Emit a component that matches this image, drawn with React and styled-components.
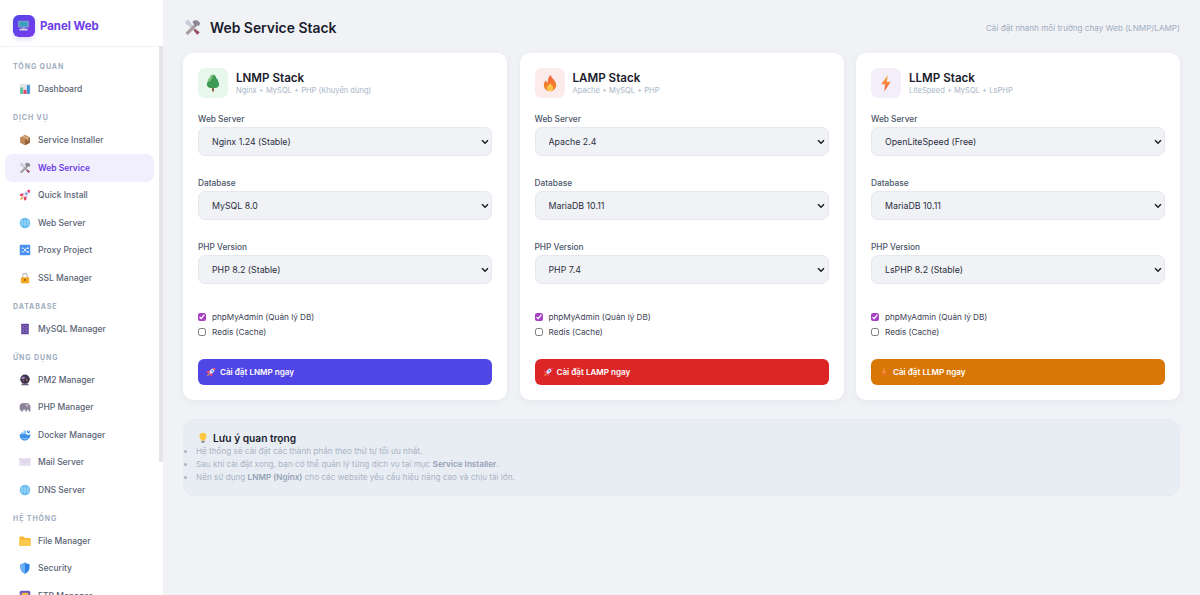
import React from 'react'
import styled, { createGlobalStyle } from 'styled-components'

const chevron = "data:image/svg+xml,%3Csvg xmlns='http://www.w3.org/2000/svg' viewBox='0 0 8 6'%3E%3Cpath d='M1 1.300 4 4.300 7 1.300' fill='none' stroke='%23222' stroke-width='1.500'/%3E%3C/svg%3E"

const GlobalStyle = createGlobalStyle`
  html, body {
    margin: 0;
    height: 100%;
    overflow: hidden;
    font-family: Inter, "Noto Sans", sans-serif;
    background: #f0f2f6;
  }
  * { box-sizing: border-box; }
`

const Layout = styled.div`
  display: flex;
  height: 100vh;
`

const Sidebar = styled.aside`
  position: relative;
  width: 163px;
  flex-shrink: 0;
  display: flex;
  flex-direction: column;
  background: #fff;
`

const Brand = styled.div`
  height: 47px;
  flex-shrink: 0;
  display: flex;
  align-items: center;
  gap: 5.5px;
  padding: 5px 0 0 12.5px;
  border-bottom: 1px solid #f1f2f6;
`

const BrandLogo = styled.div`
  width: 22px;
  height: 22px;
  border-radius: 6px;
  background: linear-gradient(135deg, #4f46e5, #7c3aed);
  box-shadow: 0 2px 5px rgba(79, 70, 229, 0.22);
  display: flex;
  align-items: center;
  justify-content: center;
`

const BrandName = styled.span`
  font-size: 11.4px;
  font-weight: 700;
  color: #6d3ce8;
`

const Nav = styled.nav`
  flex: 1;
  overflow: hidden;
  padding: 5px 4px 0 0;
`

// headless shots hide the native bar, so the thumb is drawn over the sidebar edge
const ScrollThumb = styled.div`
  position: absolute;
  top: 46px;
  right: 0;
  width: 4px;
  height: 416px;
  background: #e4e4ea;
`

const SectionLabel = styled.div`
  height: 9px;
  line-height: 9px;
  margin: 10px 0 4.5px;
  padding-left: 13px;
  font-size: 7px;
  font-weight: 700;
  letter-spacing: 0.9px;
  color: #a0aec0;
`

const NavItem = styled.a`
  height: 27.5px;
  margin: 0 5px;
  padding-left: 13.5px;
  display: flex;
  align-items: center;
  gap: 7.5px;
  border-radius: 8px;
  font-size: 8.5px;
  font-weight: ${props => (props.$active ? 600 : 500)};
  color: ${props => (props.$active ? '#6d3ce8' : '#5a6475')};
  background: ${props => (props.$active ? '#f1effd' : 'transparent')};
`

const Main = styled.main`
  flex: 1;
  min-width: 0;
  padding: 15px 20px 0;
`

const PageHeader = styled.header`
  height: 25px;
  margin-bottom: 13px;
  display: flex;
  align-items: center;
  justify-content: space-between;
`

const PageTitle = styled.h1`
  margin: 0;
  padding-left: 1px;
  display: flex;
  align-items: center;
  gap: 9px;
  font-size: 13.9px;
  font-weight: 600;
  color: #1a1c2e;
`

const PageHint = styled.span`
  font-size: 8.13px;
  color: #a0aec0;
`

const Cards = styled.div`
  display: grid;
  grid-template-columns: repeat(3, 1fr);
  gap: 12.5px;
`

const Card = styled.section`
  padding: 15px;
  background: #fff;
  border-radius: 10px;
  box-shadow: 0 2px 8px rgba(30, 40, 70, 0.05);
`

const CardHead = styled.div`
  display: flex;
  align-items: center;
  gap: 8px;
  margin-bottom: 15px;
`

const StackIcon = styled.div`
  width: 30px;
  height: 30px;
  border-radius: 7px;
  background: ${props => props.$tint};
  display: flex;
  align-items: center;
  justify-content: center;
`

const StackName = styled.div`
  font-size: 11.6px;
  font-weight: 600;
  line-height: 14px;
  color: #1a1c2e;
`

const StackSub = styled.div`
  font-size: 7.56px;
  line-height: 11px;
  color: #a9b5c7;
`

const Field = styled.div`
  margin-bottom: 21px;
`

const FieldLabel = styled.label`
  display: block;
  height: 11px;
  line-height: 12px;
  margin-bottom: 3px;
  font-size: 8.3px;
  font-weight: 500;
  color: #4a5568;
`

const Select = styled.select`
  width: 100%;
  height: 29px;
  padding: 0 16px 0 13px;
  appearance: none;
  border: 1px solid #e6e8ee;
  border-radius: 7px;
  background: #f0f2f6 url("${chevron}") no-repeat right 2.5px center / 8px 6px;
  font-family: inherit;
  font-size: 8.8px;
  color: #2b2f40;
`

const Options = styled.div`
  padding-top: 4.5px;
`

const OptionRow = styled.label`
  height: 15px;
  display: flex;
  align-items: center;
  gap: 6px;
  font-size: 8.2px;
  color: #3d4256;
`

const Check = styled.input`
  width: 8px;
  height: 8px;
  margin: 0;
  accent-color: #a742c4;
`

const InstallButton = styled.button`
  width: 100%;
  height: 26px;
  margin-top: 19.5px;
  padding: 0 8px;
  display: flex;
  align-items: center;
  gap: 4px;
  border: 0;
  border-radius: 6px;
  background: ${props => props.$color};
  font-family: inherit;
  font-size: 8.1px;
  font-weight: 600;
  color: #fff;
`

const NoteBox = styled.section`
  margin-top: 19px;
  height: 77px;
  padding: 12px 14px 0 4px;
  border: 1px solid #e6ebf1;
  border-radius: 12px;
  background: #e8edf3;
`

const NoteTitle = styled.div`
  display: flex;
  align-items: center;
  gap: 4px;
  margin-bottom: 1px;
  padding-left: 9px;
  font-size: 10.2px;
  line-height: 12px;
  font-weight: 600;
  color: #1a1c2e;
`

const NoteList = styled.ul`
  margin: 0;
  padding-left: 8px;
  list-style: disc;
  font-size: 8.17px;
  line-height: 13.2px;
  color: #a8b4c6;
  & strong { font-weight: 600; color: #94a1b6; }
`

const Svg = ({ s = 12, children }) => (
  <svg width={s} height={s} viewBox="0 0 16 16">{children}</svg>
)

const Tools = ({ s }) => (
  <Svg s={s}>
    <path d="M2 1.500 4.500 1 6 3.500 14.800 12.500 12.500 14.800 3.800 5.800 1 4.500Z" fill="#c9ccd6" />
    <path d="M10 5 11.800 6.800 4 14.800C3 15.300 1.200 13.500 1.800 12.500Z" fill="#a79ca0" />
    <path d="M8 2.500C9.500.8 12 .8 13.500 1.800L15.200 4 14 6.800 12.800 5.800 11 7 9 5Z" fill="#8d8893" />
    <path d="M10.200 9.500 14.800 12.500 12.500 14.800 9.200 10.800Z" fill="#9a4a5c" />
  </Svg>
)

const Chart = () => (
  <Svg>
    <rect x="1" y="1" width="14" height="14" rx="1" fill="#e3e4ea" />
    <rect x="1.500" y="6" width="4" height="8.500" fill="#5fc5a0" />
    <rect x="6" y="9" width="4" height="5.500" fill="#e2476b" />
    <rect x="10.500" y="3" width="4" height="11.500" fill="#3f8fd8" />
  </Svg>
)

const Box = () => (
  <Svg>
    <path d="M8 1 14.500 4.500V11.500L8 15 1.500 11.500V4.500Z" fill="#c08a58" />
    <path d="M8 8 14.500 4.500V11.500L8 15Z" fill="#94603a" />
    <path d="M4.500 3 11 6.500V9L12.500 8.200V5.700L6 2.200Z" fill="#e6c49a" />
  </Svg>
)

const Rocket = ({ s }) => (
  <Svg s={s}>
    <path d="M15 1C10.500 1.300 6.500 4 4.500 8.500L7.500 11.500C12 9.500 14.700 5.500 15 1Z" fill="#e4dff0" />
    <path d="M15 1C13.300 1.100 11.800 1.600 10.500 2.300L13.700 5.500C14.400 4.200 14.900 2.700 15 1Z" fill="#ea3f6a" />
    <path d="M6 5.500 1.500 6.500.8 9 5 9.800ZM10.500 10 9.500 14.500 7 15.200 6.200 11Z" fill="#ea3f6a" />
    <path d="M4 9.800 6.200 12 1 15Z" fill="#f6a13a" />
    <circle cx="10" cy="6" r="1.500" fill="#5a9be0" />
  </Svg>
)

const Globe = () => (
  <Svg>
    <circle cx="8" cy="8" r="7" fill="#56b4f0" />
    <path d="M1.500 5.500H14.500M1.500 10.500H14.500M1 8H15M8 1V15M5 1.800C3.500 5.500 3.500 10.500 5 14.200M11 1.800C12.500 5.500 12.500 10.500 11 14.200" stroke="#c8e9fc" strokeWidth="0.7" fill="none" />
  </Svg>
)

const Shuffle = () => (
  <Svg>
    <rect x="1" y="1" width="14" height="14" rx="1.500" fill="#4a90ee" />
    <path d="M3.500 5.500H6L10 10.500H12.500M3.500 10.500H6L10 5.500H12.500" stroke="#fff" strokeWidth="1.100" fill="none" />
    <path d="M11.500 4 13.500 5.500 11.500 7ZM11.500 9 13.500 10.500 11.500 12Z" fill="#fff" />
  </Svg>
)

const Lock = () => (
  <Svg>
    <path d="M5 7.500V4.800A3 3 0 0 1 11 4.800V7.500" stroke="#b6bac4" strokeWidth="1.400" fill="none" />
    <rect x="2.500" y="7" width="11" height="8" rx="1" fill="#f5a623" />
    <circle cx="8" cy="10.500" r="1.200" fill="#6b4a12" />
  </Svg>
)

const Cabinet = () => (
  <Svg>
    <rect x="3" y="1" width="10" height="14" rx="0.800" fill="#5b3f96" />
    <rect x="4.500" y="2.500" width="7" height="5" fill="#7f63b8" />
    <rect x="4.500" y="8.500" width="7" height="5" fill="#7f63b8" />
    <rect x="6.500" y="4.500" width="3" height="1" fill="#3c2a66" />
    <rect x="6.500" y="10.500" width="3" height="1" fill="#3c2a66" />
  </Svg>
)

const Ball = () => (
  <Svg>
    <circle cx="8" cy="7" r="6.300" fill="#3f3350" />
    <path d="M3 6C4 3.500 7 3 8.500 4.500 7 6.500 5 7.500 3 6Z" fill="#a98bc9" />
    <circle cx="10.500" cy="8" r="1" fill="#f0b84a" />
    <circle cx="5.500" cy="9" r="0.800" fill="#f0b84a" />
    <path d="M4 12.500H12L13 15H3Z" fill="#6b5a78" />
  </Svg>
)

const Elephant = () => (
  <Svg>
    <path d="M.8 7C.8 3.500 3.500 2.500 6 2.500H10C13 2.500 15.200 5 15.200 8V14H13L12.600 11.500H11L10.500 14H8.500V11.500H5.500V14H3V9.500C2.800 10.500 2.800 11.500 3 12L1.300 12.500C.8 11 .8 9 .8 7Z" fill="#8d8499" />
    <path d="M8.500 3C11 3 12.800 5 12.800 7.300 11 8.300 9.300 7.800 8.500 6Z" fill="#b8aec2" />
  </Svg>
)

const Whale = () => (
  <Svg>
    <path d="M.8 7.500C3 6 9 6 12 8 13 8 14.500 7.500 15.200 6.500 15.800 11 12 15.200 7.500 15.200 3.500 15.200.8 11.500.8 7.500Z" fill="#3d8ee6" />
    <path d="M2.500 7V4.500H6V2H9.500V7Z" fill="#8cc4f6" />
    <path d="M11.500 1 12.800 3.500 15 1.800 14 5.500 12 6 10.500 4Z" fill="#3d8ee6" />
    <path d="M2 11C5 13 9 13 12 11.500 10 14.300 4.500 14.500 2 11Z" fill="#b7dcf9" />
  </Svg>
)

const Envelope = () => (
  <Svg>
    <rect x="0.500" y="3" width="15" height="10" fill="#e4dcee" />
    <path d="M.5 3 8 9 15.500 3" stroke="#cfc2df" strokeWidth="0.800" fill="none" />
  </Svg>
)

const Folder = () => (
  <Svg>
    <path d="M.5 3.500C.5 2.700 1 2 2 2H6L8 4H14C15 4 15.500 4.700 15.500 5.500V13C15.500 13.800 15 14.500 14 14.500H2C1 14.500 .5 13.800 .5 13Z" fill="#f7b733" />
    <path d="M.5 6H15.500V13C15.500 13.800 15 14.500 14 14.500H2C1 14.500 .5 13.800 .5 13Z" fill="#fcc94f" />
  </Svg>
)

const Shield = () => (
  <Svg>
    <path d="M8 .5C10 2 12 2.500 14 2.500V8C14 11.500 11 14 8 15.500 5 14 2 11.500 2 8V2.500C4 2.500 6 2 8 .5Z" fill="#2f80e4" />
    <path d="M8 .5V15.500C5 14 2 11.500 2 8V2.500C4 2.500 6 2 8 .5Z" fill="#6cb0f4" />
  </Svg>
)

const Ftp = () => (
  <Svg>
    <rect x="1" y="1" width="14" height="14" rx="2" fill="#6b57c4" />
    <rect x="3.500" y="3.500" width="9" height="9" rx="1" fill="#f5b642" />
  </Svg>
)

const Monitor = () => (
  <Svg s={13}>
    <rect x="1.500" y="2" width="13" height="8.500" rx="0.800" fill="#9aa9c6" />
    <rect x="2.500" y="3" width="11" height="6.500" fill="#3f9fc0" />
    <rect x="6.500" y="10.500" width="3" height="1.500" fill="#b6c1d6" />
    <rect x="3" y="12" width="10" height="2" rx="0.500" fill="#cfd3e6" />
  </Svg>
)

const Tree = () => (
  <Svg s={18}>
    <rect x="7.200" y="11" width="1.600" height="4.500" fill="#7d5233" />
    <path d="M8 .6C9.600 .6 10.700 2 10.800 3.500 12 4.200 12.700 5.500 12.700 7 13.300 7.800 13.500 8.500 13.500 9.200 13.500 11 12 12.500 10 12.500H6C4 12.500 2.500 11 2.500 9.200 2.500 8.500 2.700 7.800 3.300 7 3.300 5.500 4 4.200 5.200 3.500 5.300 2 6.400 .6 8 .6Z" fill="#3f9a55" />
    <path d="M8 .6C6.400 .6 5.300 2 5.200 3.500 4 4.200 3.300 5.500 3.300 7 5.500 7 7.500 4.500 8 .6Z" fill="#7fc77f" />
  </Svg>
)

const Fire = () => (
  <Svg s={18}>
    <defs>
      <linearGradient id="fireGrad" x1="0" y1="0" x2="0" y2="1">
        <stop offset="0" stopColor="#f4623a" />
        <stop offset="1" stopColor="#f58b2a" />
      </linearGradient>
    </defs>
    <path d="M8.500 .8C9 3.500 13.500 5.500 13.500 10 13.500 13 11 15.300 8 15.300 5 15.300 2.500 13 2.500 10 2.500 8 3.500 6.500 4.500 5.500 4.700 6.800 5.200 7.500 6 7.800 6 5 6.500 2.500 8.500 .8Z" fill="url(#fireGrad)" />
    <path d="M8.200 8C8.500 9.500 10.800 10.500 10.800 12.500 10.800 14 9.500 15.300 8 15.300 6.500 15.300 5.200 14 5.200 12.500 5.200 10.500 7.500 9.800 8.200 8Z" fill="#fbc64b" />
  </Svg>
)

const Bolt = ({ s = 18 }) => (
  <Svg s={s}>
    <defs>
      <linearGradient id="boltGrad" x1="0" y1="0" x2="0" y2="1">
        <stop offset="0" stopColor="#f9b03f" />
        <stop offset="1" stopColor="#ef5a3c" />
      </linearGradient>
    </defs>
    <path d="M9.500 .8 3.800 9H7.200L6.500 15.500 12.200 6.800H8.800Z" fill="url(#boltGrad)" />
  </Svg>
)

const Bulb = () => (
  <Svg>
    <path d="M8 1C5.200 1 3.200 3 3.200 5.700 3.200 8.500 5.500 9.500 5.700 11.500H10.300C10.500 9.500 12.800 8.500 12.800 5.700 12.800 3 10.800 1 8 1Z" fill="#fbc840" />
    <rect x="5.800" y="11.500" width="4.400" height="3" rx="0.800" fill="#8f9ab0" />
  </Svg>
)

const sections = [
  { title: 'TỔNG QUAN', items: [['Dashboard', Chart]] },
  {
    title: 'DỊCH VỤ',
    items: [
      ['Service Installer', Box],
      ['Web Service', Tools, true],
      ['Quick Install', Rocket],
      ['Web Server', Globe],
      ['Proxy Project', Shuffle],
      ['SSL Manager', Lock],
    ],
  },
  { title: 'DATABASE', items: [['MySQL Manager', Cabinet]] },
  {
    title: 'ỨNG DỤNG',
    items: [
      ['PM2 Manager', Ball],
      ['PHP Manager', Elephant],
      ['Docker Manager', Whale],
      ['Mail Server', Envelope],
      ['DNS Server', Globe],
    ],
  },
  {
    title: 'HỆ THỐNG',
    items: [
      ['File Manager', Folder],
      ['Security', Shield],
      ['FTP Manager', Ftp],
    ],
  },
]

const stacks = [
  {
    name: 'LNMP',
    sub: 'Nginx + MySQL + PHP (Khuyên dùng)',
    tint: '#e8f7ec',
    Icon: Tree,
    server: 'Nginx 1.24 (Stable)',
    db: 'MySQL 8.0',
    php: 'PHP 8.2 (Stable)',
    color: '#4f46e5',
    BtnIcon: Rocket,
  },
  {
    name: 'LAMP',
    sub: 'Apache + MySQL + PHP',
    tint: '#fbeceb',
    Icon: Fire,
    server: 'Apache 2.4',
    db: 'MariaDB 10.11',
    php: 'PHP 7.4',
    color: '#dc2626',
    BtnIcon: Rocket,
  },
  {
    name: 'LLMP',
    sub: 'LiteSpeed + MySQL + LsPHP',
    tint: '#f4eefa',
    Icon: Bolt,
    server: 'OpenLiteSpeed (Free)',
    db: 'MariaDB 10.11',
    php: 'LsPHP 8.2 (Stable)',
    color: '#d97706',
    BtnIcon: Bolt,
  },
]

function StackCard({ stack }) {
  const { Icon, BtnIcon } = stack
  return (
    <Card>
      <CardHead>
        <StackIcon $tint={stack.tint}><Icon /></StackIcon>
        <div>
          <StackName>{stack.name} Stack</StackName>
          <StackSub>{stack.sub}</StackSub>
        </div>
      </CardHead>
      <Field>
        <FieldLabel>Web Server</FieldLabel>
        <Select defaultValue={stack.server}><option>{stack.server}</option></Select>
      </Field>
      <Field>
        <FieldLabel>Database</FieldLabel>
        <Select defaultValue={stack.db}><option>{stack.db}</option></Select>
      </Field>
      <Field>
        <FieldLabel>PHP Version</FieldLabel>
        <Select defaultValue={stack.php}><option>{stack.php}</option></Select>
      </Field>
      <Options>
        <OptionRow><Check type="checkbox" defaultChecked /> phpMyAdmin (Quản lý DB)</OptionRow>
        <OptionRow><Check type="checkbox" /> Redis (Cache)</OptionRow>
      </Options>
      <InstallButton $color={stack.color}>
        <BtnIcon s={10} /> Cài đặt {stack.name} ngay
      </InstallButton>
    </Card>
  )
}

export default function App() {
  return (
    <Layout>
      <GlobalStyle />
      <Sidebar>
        <Brand>
          <BrandLogo><Monitor /></BrandLogo>
          <BrandName>Panel Web</BrandName>
        </Brand>
        <Nav>
          {sections.map(section => (
            <div key={section.title}>
              <SectionLabel>{section.title}</SectionLabel>
              {section.items.map(([label, Icon, active]) => (
                <NavItem key={label} $active={active}><Icon />{label}</NavItem>
              ))}
            </div>
          ))}
        </Nav>
        <ScrollThumb />
      </Sidebar>
      <Main>
        <PageHeader>
          <PageTitle><Tools s={17} />Web Service Stack</PageTitle>
          <PageHint>Cài đặt nhanh môi trường chạy Web (LNMP/LAMP)</PageHint>
        </PageHeader>
        <Cards>
          {stacks.map(stack => <StackCard key={stack.name} stack={stack} />)}
        </Cards>
        <NoteBox>
          <NoteTitle><Bulb />Lưu ý quan trọng</NoteTitle>
          <NoteList>
            <li>Hệ thống sẽ cài đặt các thành phần theo thứ tự tối ưu nhất.</li>
            <li>Sau khi cài đặt xong, bạn có thể quản lý từng dịch vụ tại mục <strong>Service Installer</strong>.</li>
            <li>Nên sử dụng <strong>LNMP (Nginx)</strong> cho các website yêu cầu hiệu năng cao và chịu tải lớn.</li>
          </NoteList>
        </NoteBox>
      </Main>
    </Layout>
  )
}
